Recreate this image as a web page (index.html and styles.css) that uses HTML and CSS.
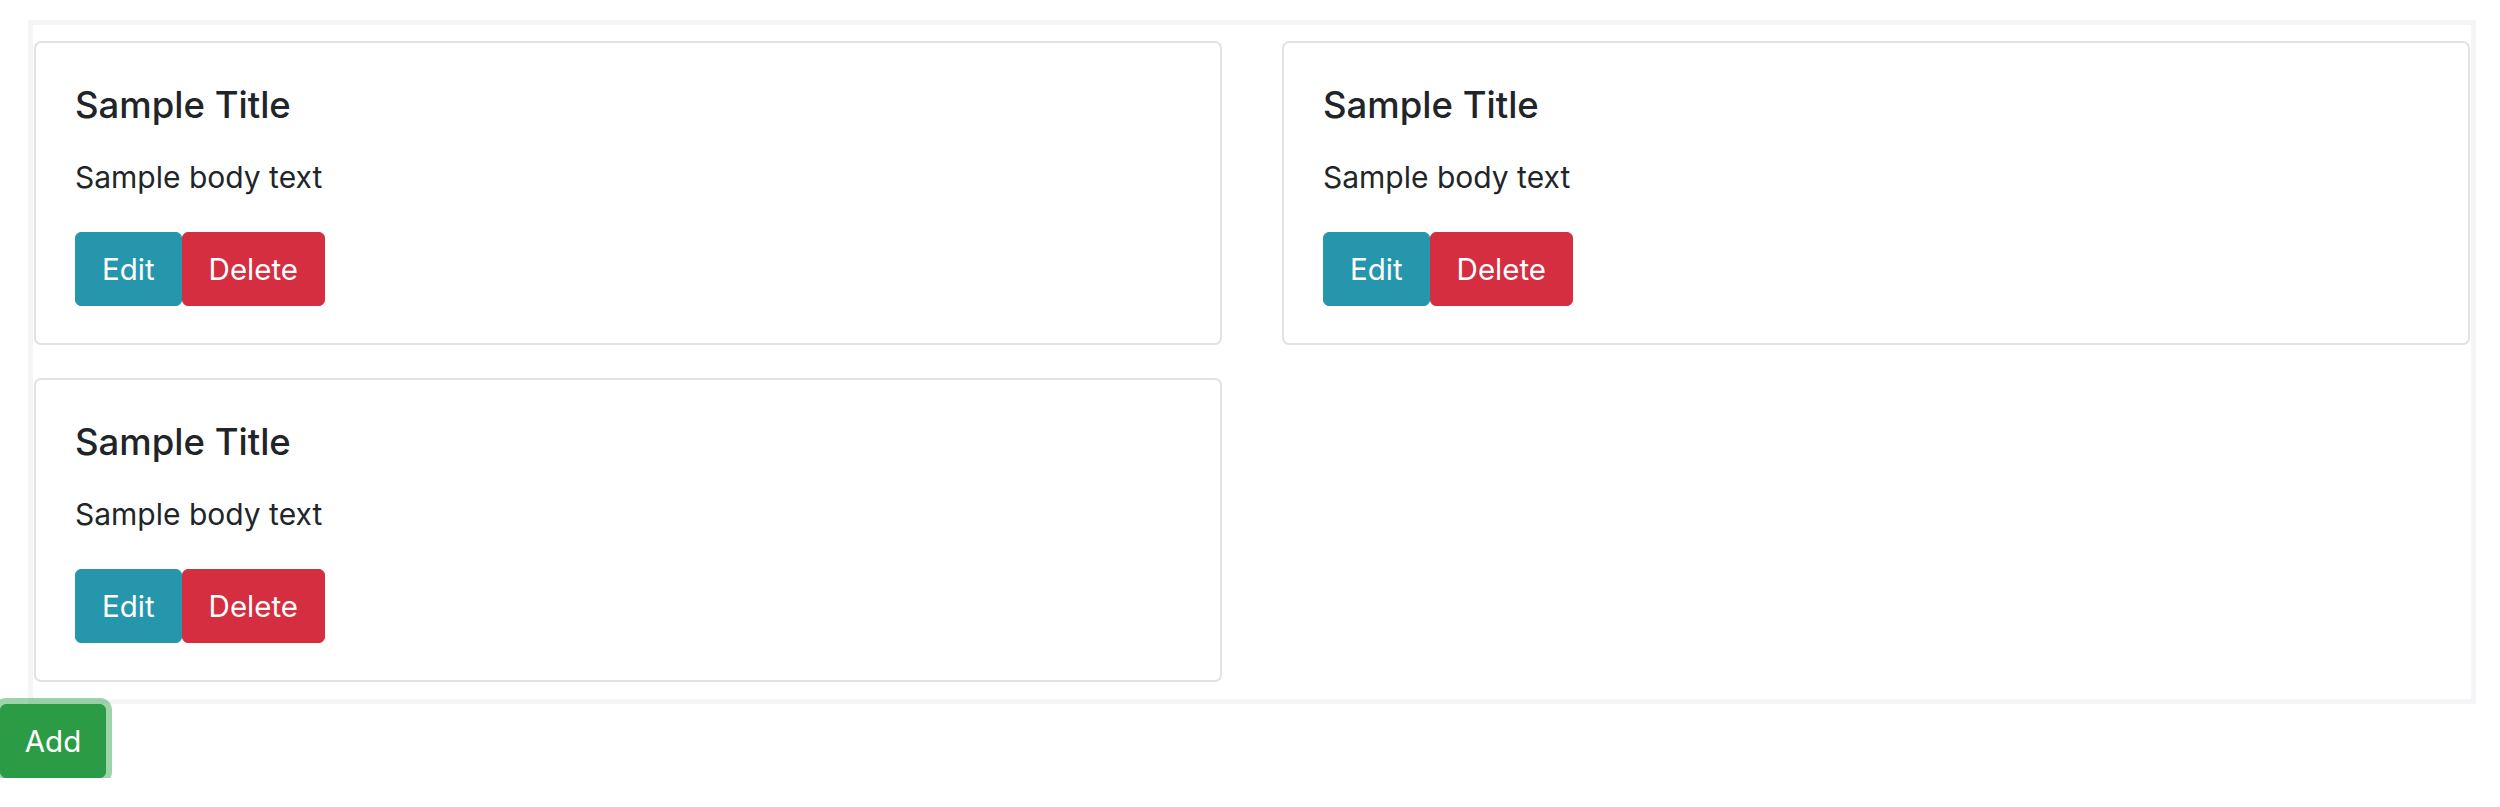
FILE: index.html
```html
<!DOCTYPE html>
<html lang="en">
<head>
<meta charset="utf-8">
<title>Cards</title>
<link rel="stylesheet" href="styles.css">
</head>
<body>
<div class="board">
  <div class="card">
    <h5 class="card-title">Sample Title</h5>
    <p class="card-text">Sample body text</p>
    <div class="actions">
      <button class="btn btn-info">Edit</button><button class="btn btn-danger">Delete</button>
    </div>
  </div>
  <div class="card">
    <h5 class="card-title">Sample Title</h5>
    <p class="card-text">Sample body text</p>
    <div class="actions">
      <button class="btn btn-info">Edit</button><button class="btn btn-danger">Delete</button>
    </div>
  </div>
  <div class="card">
    <h5 class="card-title">Sample Title</h5>
    <p class="card-text">Sample body text</p>
    <div class="actions">
      <button class="btn btn-info">Edit</button><button class="btn btn-danger">Delete</button>
    </div>
  </div>
</div>
<button class="btn btn-success btn-focus">Add</button>
</body>
</html>
```
FILE: styles.css
```css
* { box-sizing: border-box; }
html, body {
  margin: 0;
  padding: 0;
  background: #ffffff;
}
body {
  font-family: Inter, "Liberation Sans", sans-serif;
  color: #212529;
  font-size: 29.5px;
  line-height: 1.5;
}
.board {
  margin: 20px 0 0 28px;
  width: 2448px;
  border: 5px solid #f5f5f7;
  padding: 16px 1px 17px;
  display: grid;
  grid-template-columns: 1188px 1188px;
  column-gap: 60px;
  row-gap: 33px;
}
.card {
  height: 304px;
  border: 2px solid #e2e2e2;
  border-radius: 7px;
  padding: 41px 39px 0;
  display: flex;
  flex-direction: column;
}
.card-title {
  margin: 0 0 27px;
  font-size: 36.5px;
  font-weight: 500;
  line-height: 1.2;
}
.card-text {
  margin: 0 0 33px;
  font-size: 30px;
  line-height: 44px;
}
.actions {
  display: flex;
}
.btn {
  font-family: inherit;
  font-size: 29.5px;
  line-height: 44px;
  height: 74px;
  padding: 0 26px;
  border: 1px solid transparent;
  border-radius: 6px;
  color: #ffffff;
  cursor: pointer;
  display: block;
  flex-shrink: 0;
}
.btn-info {
  background: #2596ab;
  border-color: #2596ab;
}
.btn-danger {
  background: #d42e40;
  border-color: #d42e40;
}
.btn-success {
  background: #2b9c45;
  border-color: #2b9c45;
}
.btn-focus {
  margin: 0;
  width: 106px;
  padding: 0;
  text-align: center;
  box-shadow: 0 0 0 6px rgba(60, 170, 85, 0.5);
}
```
